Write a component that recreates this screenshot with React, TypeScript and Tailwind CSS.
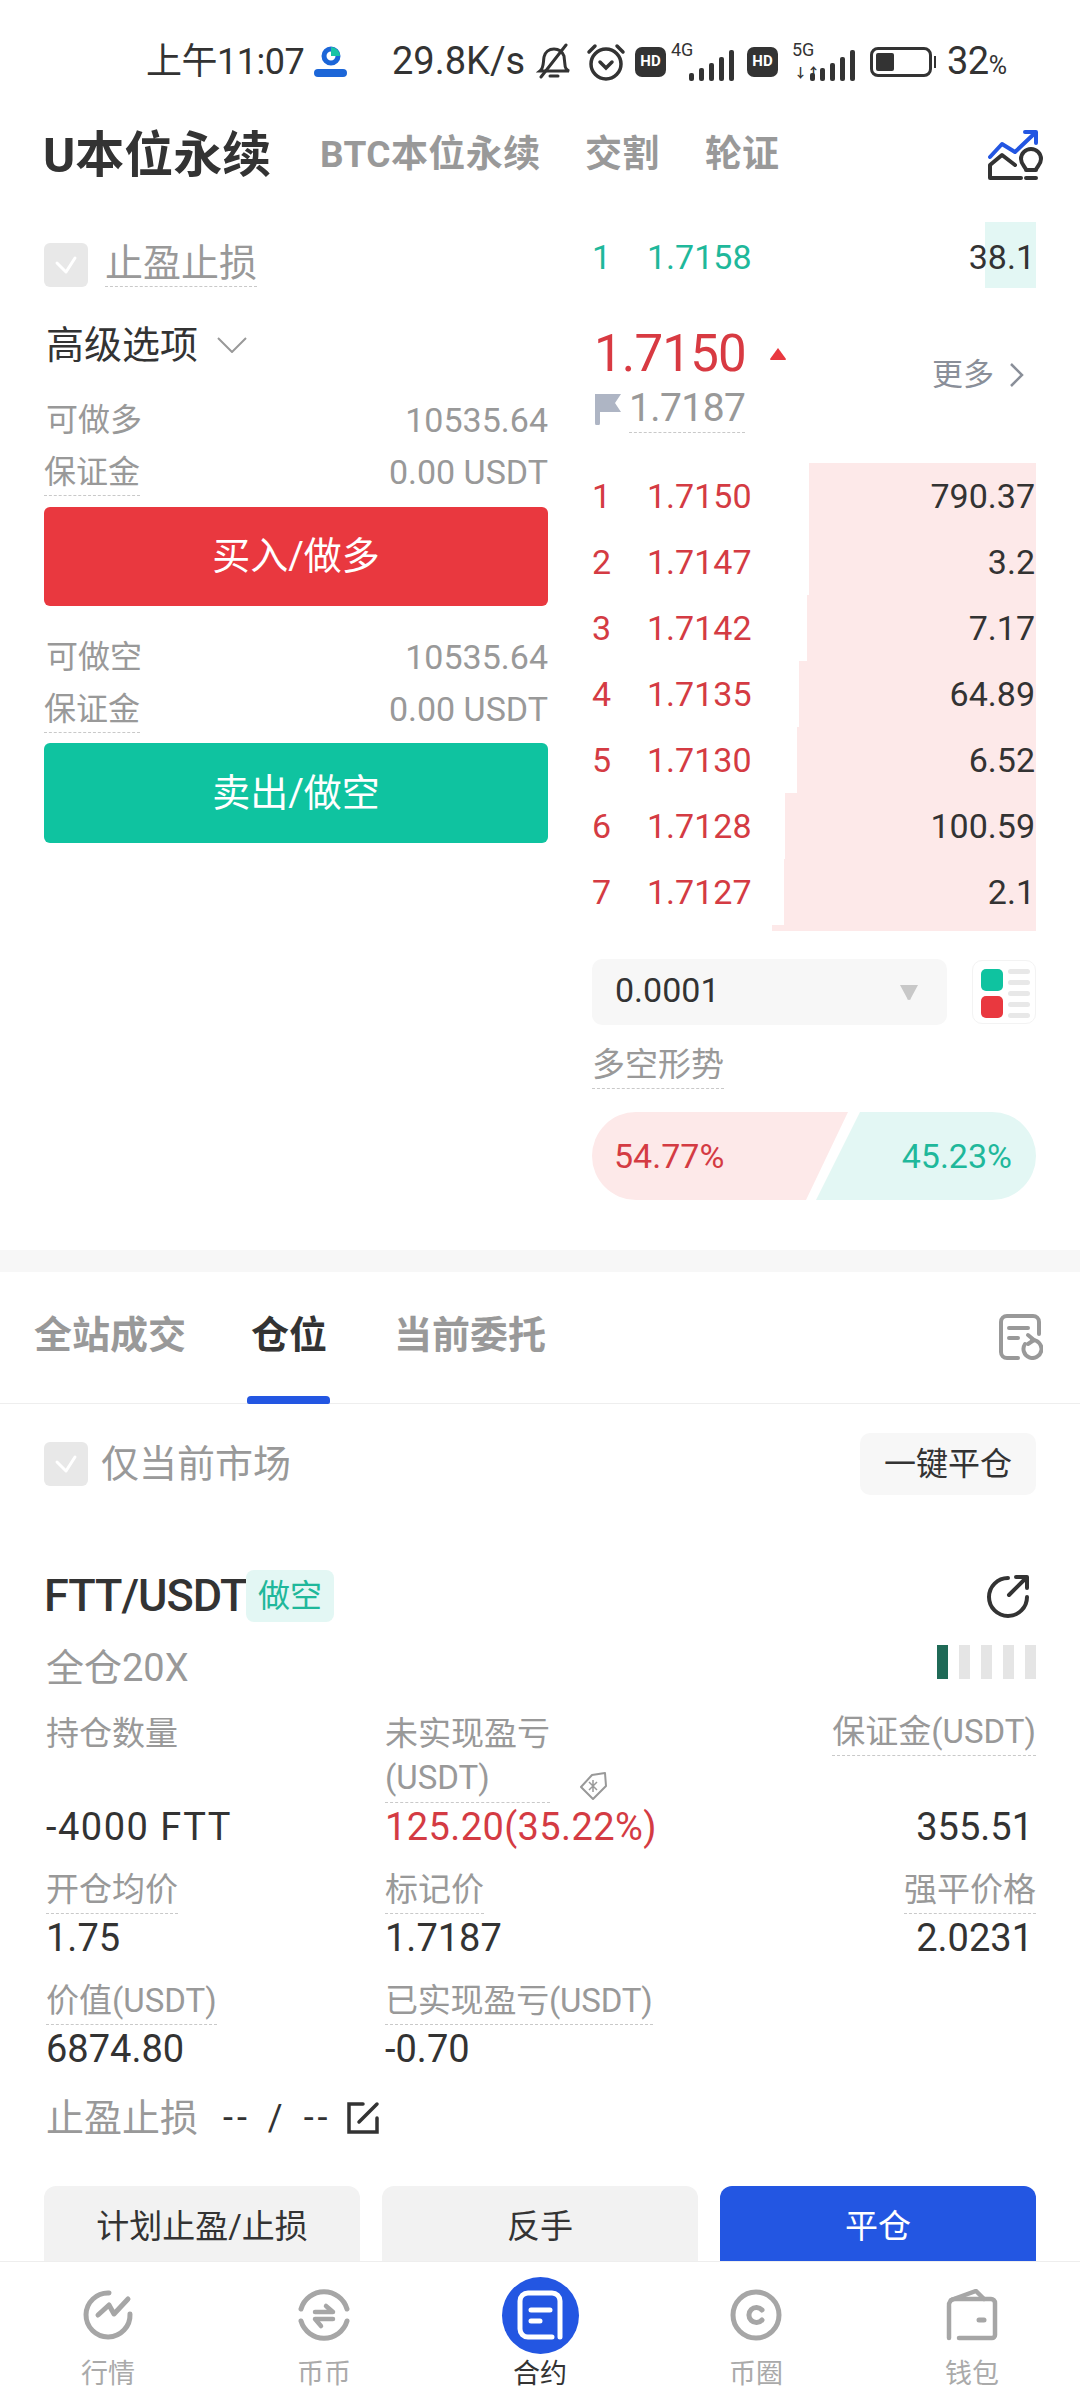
import type { ReactNode } from "react";

const asks = [
  { n: 1, price: "1.7150", qty: "790.37", bar: 227 },
  { n: 2, price: "1.7147", qty: "3.2", bar: 227 },
  { n: 3, price: "1.7142", qty: "7.17", bar: 229 },
  { n: 4, price: "1.7135", qty: "64.89", bar: 237 },
  { n: 5, price: "1.7130", qty: "6.52", bar: 239 },
  { n: 6, price: "1.7128", qty: "100.59", bar: 251 },
  { n: 7, price: "1.7127", qty: "2.1", bar: 252 },
];

const Dashed = ({ children, className = "" }: { children: ReactNode; className?: string }) => (
  <span className={`block h-[44px] whitespace-nowrap border-b border-dashed border-[#c9c9c9] leading-[40px] ${className}`}>
    {children}
  </span>
);

const Checkbox = () => (
  <span className="flex h-[44px] w-[44px] shrink-0 items-center justify-center rounded-[6px] bg-[#e8e8e8]">
    <svg width="24" height="20" viewBox="0 0 24 20" fill="none">
      <path d="M3 8l9 9 9-14" stroke="#fff" strokeWidth="3" strokeLinecap="round" strokeLinejoin="round" />
    </svg>
  </span>
);

const Signal = ({ label, five }: { label: string; five?: boolean }) => (
  <div className="relative h-[38px] w-[64px]">
    <span className="absolute -top-[2px] left-0 text-[18px] leading-[18px] text-[#333]">{label}</span>
    {five && <span className="absolute bottom-[2px] left-[2px] text-[13px] font-bold leading-[13px] text-[#333]">↓↑</span>}
    <svg className="absolute bottom-0 right-0" width="48" height="32" viewBox="0 0 48 32" fill="#333">
      <rect x="2" y="24" width="5" height="8" rx="2" />
      <rect x="12" y="19" width="5" height="13" rx="2" />
      <rect x="22" y="14" width="5" height="18" rx="2" />
      <rect x="32" y="8" width="5" height="24" rx="2" />
      <rect x="42" y="1" width="5" height="31" rx="2" />
    </svg>
  </div>
);

const Hd = () => (
  <span className="flex h-[30px] w-[31px] items-center justify-center rounded-[7px] bg-[#333] text-[15px] font-bold text-white">
    HD
  </span>
);

const StatusBar = () => (
  <div className="flex h-[123px] items-center pl-[146px] text-[36px] text-[#333]">
    <span className="w-[159px] tracking-[-0.5px]">上午11:07</span>
    <svg className="ml-[9px]" width="34" height="32" viewBox="0 0 34 32" fill="none">
      <circle cx="17" cy="10" r="7" stroke="#1c66d8" strokeWidth="5" />
      <path d="M17 1a9 9 0 0 1 9 9h-9z" fill="#19c3a5" />
      <rect x="0" y="23" width="33" height="8" rx="4" fill="#1c66d8" />
    </svg>
    <span className="ml-[44px] w-[136px] whitespace-nowrap text-[38px]">29.8K/s</span>
    <svg className="ml-[8px]" width="36" height="38" viewBox="0 0 36 38" fill="none" stroke="#333" strokeWidth="3" strokeLinecap="round">
      <path d="M4 28c4-3 3-8 4-14 1-5 5-8 10-8s8 2 10 7l1 9c0 3 2 5 4 6H4z" />
      <path d="M14 33h8M30 2L5 34" />
    </svg>
    <svg className="ml-[14px]" width="40" height="38" viewBox="0 0 40 38" fill="none" stroke="#333" strokeWidth="3.5" strokeLinecap="round">
      <circle cx="20" cy="21" r="15" />
      <path d="M3 9l6-6M37 9l-6-6" />
      <path d="M14 19l6 6 6-6" />
    </svg>
    <span className="ml-[9px]"><Hd /></span>
    <span className="ml-[5px]"><Signal label="4G" /></span>
    <span className="ml-[12px]"><Hd /></span>
    <span className="ml-[14px]"><Signal label="5G" five /></span>
    <div className="ml-[14px] flex items-center">
      <span className="flex h-[30px] w-[62px] items-center rounded-[8px] border-[3px] border-[#333] px-[3px]">
        <span className="h-[18px] w-[18px] rounded-[2px] bg-[#333]" />
      </span>
      <span className="ml-[2px] h-[12px] w-[2px] bg-[#333]" />
    </div>
    <span className="ml-[11px] whitespace-nowrap text-[38px] tracking-[-0.5px]">
      32<span className="text-[25px]">%</span>
    </span>
  </div>
);

const TopTabs = () => (
  <div className="flex h-[64px] items-center pl-[43px] pr-[37px]">
    <span className="w-[229px] whitespace-nowrap text-[49px] font-bold leading-none text-[#333]">U本位永续</span>
    <span className="ml-[48px] w-[219px] whitespace-nowrap text-[37px] font-bold tracking-[0.4px] text-[#999]">BTC本位永续</span>
    <span className="ml-[46px] text-[37px] font-bold text-[#999]">交割</span>
    <span className="ml-[46px] text-[37px] font-bold text-[#999]">轮证</span>
    <svg className="ml-auto" width="55" height="50" viewBox="0 0 55 50" fill="none" strokeLinecap="round" strokeLinejoin="round">
      <path d="M2 27l12-13 13 8L47 3" stroke="#2356e2" strokeWidth="4" />
      <path d="M37 2h11v11" stroke="#2356e2" strokeWidth="4" />
      <path d="M2 48V35l12-10 13 10M2 48h31" stroke="#333" strokeWidth="4" />
      <path d="M38 40c0-3-5-5-5-11a10 10 0 0 1 20 0c0 6-5 8-5 11zM38 48h10" stroke="#333" strokeWidth="4" />
    </svg>
  </div>
);

const Info = ({ label, value, dashed }: { label: string; value: string; dashed?: boolean }) => (
  <div className="flex h-[40px] items-start justify-between text-[#999]">
    {dashed ? (
      <Dashed className="w-[96px] text-[32px]">{label}</Dashed>
    ) : (
      <span className="pl-[2px] text-[32px] leading-[40px]">{label}</span>
    )}
    <span className="text-[34px] leading-[40px]">{value}</span>
  </div>
);

const OrderForm = () => (
  <div className="w-[504px] shrink-0">
    <div className="mt-[21px] flex h-[44px] items-start gap-[17px] text-[38px] text-[#999]">
      <Checkbox />
      <Dashed className="w-[152px]">止盈止损</Dashed>
    </div>
    <div className="mt-[33px] flex h-[50px] items-center pl-[2px] text-[38px] text-[#333]">
      高级选项
      <svg className="ml-[19px]" width="30" height="16" viewBox="0 0 30 16" fill="none">
        <path d="M1 1l14 14L29 1" stroke="#999" strokeWidth="2" />
      </svg>
    </div>
    <div className="mt-[30px]"><Info label="可做多" value="10535.64" /></div>
    <div className="mt-[12px]"><Info label="保证金" value="0.00 USDT" dashed /></div>
    <button className="mt-[15px] flex h-[99px] w-full items-center justify-center rounded-[6px] bg-[#e9383f] text-[38px] text-white">
      买入/做多
    </button>
    <div className="mt-[31px]"><Info label="可做空" value="10535.64" /></div>
    <div className="mt-[12px]"><Info label="保证金" value="0.00 USDT" dashed /></div>
    <button className="mt-[14px] flex h-[100px] w-full items-center justify-center rounded-[6px] bg-[#0fc3a0] text-[38px] text-white">
      卖出/做空
    </button>
  </div>
);

const BookRow = ({ n, price, qty, bar, color, barColor, className = "" }: { n: number; price: string; qty: string; bar: number; color: string; barColor: string; className?: string }) => (
  <div className={`relative flex h-[66px] items-center text-[34px] ${className}`}>
    <span className={`absolute bottom-0 right-0 top-0 ${barColor}`} style={{ width: bar }} />
    <span className={`relative w-[55px] ${color}`}>{n}</span>
    <span className={`relative ${color}`}>{price}</span>
    <span className="relative ml-auto pr-[1px] text-[#333]">{qty}</span>
  </div>
);

const OrderBook = () => (
  <div className="w-[444px] shrink-0">
    <BookRow n={1} price="1.7158" qty="38.1" bar={51} color="text-[#1fb89b]" barColor="bg-[#e3f7f4]" className="pt-[4px]" />
    <div className="flex h-[175px] items-start justify-between">
      <div className="pl-[2px] pt-[38px]">
        <div className="flex h-[56px] items-center text-[#d83a42]">
          <span className="text-[51px] tracking-[-0.8px]">1.7150</span>
          <svg className="ml-[23px]" width="18" height="14" viewBox="0 0 18 14" fill="#e9383f">
            <path d="M9 1l8 11a1 1 0 0 1-1 1H2a1 1 0 0 1-1-1z" />
          </svg>
        </div>
        <div className="mt-[2px] flex h-[49px] items-start">
          <svg className="mt-[9px]" width="28" height="32" viewBox="0 0 28 32" fill="#aeb5c4">
            <path d="M1 1h26l-6 9 6 9H6v11a2.500 2.500 0 0 1-5 0z" />
          </svg>
          <span className="ml-[7px] block h-[49px] w-[116px] border-b border-dashed border-[#c9c9c9] text-[39px] leading-[48px] tracking-[-0.6px] text-[#999]">
            1.7187
          </span>
        </div>
      </div>
      <div className="mt-[71px] flex items-center pr-[12px] text-[31px] leading-none text-[#8a8f99]">
        更多
        <svg className="ml-[15px]" width="15" height="24" viewBox="0 0 15 24" fill="none">
          <path d="M2 1l11 11L2 23" stroke="#8a8f99" strokeWidth="2.500" />
        </svg>
      </div>
    </div>
    {asks.map((a) => (
      <BookRow key={a.n} {...a} color="text-[#d43b43]" barColor="bg-[#fde9e9]" />
    ))}
    <div className="ml-auto h-[6px] w-[264px] bg-[#fde9e9]" />

    <div className="mt-[28px] flex items-center justify-between">
      <div className="flex h-[66px] w-[355px] items-center justify-between rounded-[10px] bg-[#f7f7f7] pl-[23px] pr-[28px] text-[34px] text-[#333]">
        <span className="pb-[4px]">0.0001</span>
        <svg width="20" height="16" viewBox="0 0 20 16" fill="#c8c8c8">
          <path d="M1 1h18l-7 13a2 2 0 0 1-4 0z" />
        </svg>
      </div>
      <div className="flex h-[64px] w-[64px] gap-[5px] rounded-[10px] border border-[#f3f3f3] pl-[8px] pt-[8px]">
        <div className="flex flex-col gap-[5px]">
          <span className="h-[22px] w-[22px] rounded-[5px] bg-[#0fc3a0]" />
          <span className="h-[22px] w-[22px] rounded-[5px] bg-[#e9383f]" />
        </div>
        <div className="flex flex-col gap-[6px]">
          {[0, 1, 2, 3, 4].map((i) => (
            <span key={i} className="h-[5px] w-[22px] rounded-full bg-[#e8e8e8]" />
          ))}
        </div>
      </div>
    </div>
    <div className="mt-[20px] w-[132px] text-[33px] text-[#999]">
      <Dashed>多空形势</Dashed>
    </div>
    <div className="mt-[23px] flex h-[88px] text-[34px]">
      <div className="flex w-[256px] items-center rounded-l-[44px] bg-[#fde9e9] pl-[22px] text-[#d43b43] [clip-path:polygon(0_0,100%_0,calc(100%-42px)_100%,0_100%)]">
        54.77%
      </div>
      <div className="-ml-[32px] flex w-[220px] items-center justify-end rounded-r-[44px] bg-[#e3f7f4] pr-[24px] text-[#1fb89b] [clip-path:polygon(44px_0,100%_0,100%_100%,0_100%)]">
        45.23%
      </div>
    </div>
  </div>
);

const PositionTabs = () => (
  <div className="flex h-[132px] border-b border-[#eeeeee] pl-[34px] pr-[37px] pt-[44px] text-[38px] font-bold leading-[38px] text-[#999]">
    <span>全站成交</span>
    <span className="relative ml-[65px] w-[76px] text-[#333]">
      仓位
      <span className="absolute -left-[4px] bottom-[-1px] h-[8px] w-[83px] rounded-t-[4px] rounded-b-[2px] bg-[#2356e2]" />
    </span>
    <span className="ml-[67px]">当前委托</span>
    <svg className="-mt-[2px] ml-auto h-[46px]" width="44" height="46" viewBox="0 0 44 46" fill="none" stroke="#999" strokeWidth="4" strokeLinecap="round" strokeLinejoin="round">
      <path d="M19 44H8a6 6 0 0 1-6-6V8a6 6 0 0 1 6-6h26a6 6 0 0 1 6 6v12" />
      <path d="M10 14h19M10 24h9" />
      <path d="M26 30a9 9 0 1 0 7-4" />
      <path d="M29 21l6 5-6 4" />
    </svg>
  </div>
);

const Label = ({ children, className = "" }: { children: ReactNode; className?: string }) => (
  <Dashed className={`w-fit text-[33px] text-[#999] ${className}`}>{children}</Dashed>
);

const Value = ({ children, className = "text-[#333]" }: { children: ReactNode; className?: string }) => (
  <div className={`h-[48px] text-[38px] leading-[48px] ${className}`}>{children}</div>
);

const Position = () => (
  <div className="px-[44px]">
    <div className="mt-[29px] flex h-[62px] items-center justify-between">
      <div className="flex items-center gap-[13px] text-[38px] text-[#999]">
        <Checkbox />
        仅当前市场
      </div>
      <button className="flex h-[62px] w-[176px] items-center justify-center rounded-[10px] bg-[#f7f7f7] text-[32px] text-[#333]">
        一键平仓
      </button>
    </div>

    <div className="mt-[75px] flex h-[52px] items-center">
      <span className="w-[202px] whitespace-nowrap text-[45px] font-medium tracking-[-1px] text-[#333]">FTT/USDT</span>
      <span className="flex h-[52px] w-[88px] items-center justify-center rounded-[8px] bg-[#e3f7f4] text-[32px] text-[#1fb89b]">
        做空
      </span>
      <svg className="ml-auto mr-[6px]" width="44" height="44" viewBox="0 0 44 44" fill="none" stroke="#333" strokeWidth="4" strokeLinecap="round" strokeLinejoin="round">
        <path d="M22 4A19 19 0 1 0 41 23" />
        <path d="M23 21L40 4M30 3h11v11" />
      </svg>
    </div>

    <div className="mt-[23px] flex h-[40px] items-start justify-between pl-[2px]">
      <span className="pt-[3px] text-[38px] leading-[40px] text-[#999]">全仓20X</span>
      <div className="flex gap-[11px]">
        <span className="h-[34px] w-[11px] bg-[#1f6a57]" />
        <span className="h-[34px] w-[11px] bg-[#e5e5e5]" />
        <span className="h-[34px] w-[11px] bg-[#e5e5e5]" />
        <span className="h-[34px] w-[11px] bg-[#e5e5e5]" />
        <span className="h-[34px] w-[11px] bg-[#e5e5e5]" />
      </div>
    </div>

    <div className="mt-[27px] flex pl-[2px]">
      <div className="w-[339px]">
        <div className="h-[91px] text-[33px] leading-[44px] text-[#999]">持仓数量</div>
        <Value className="tracking-[1.5px] text-[#333]">-4000 FTT</Value>
      </div>
      <div className="flex-1">
        <div className="flex h-[91px] items-end">
          <span className="block h-[91px] w-fit whitespace-nowrap border-b border-dashed border-[#c9c9c9] text-[33px] leading-[44px] text-[#999]">
            未实现盈亏
            <br />
            (USDT)
          </span>
          <svg className="mb-[2px] ml-[28px]" width="30" height="30" viewBox="0 0 30 30" fill="none" stroke="#999" strokeWidth="2" strokeLinejoin="round">
            <path d="M14 4l13-2 1 13-13 13L3 16z" />
            <path d="M11 11l8 8M19 11l-8 8M15 9v12" strokeWidth="1.500" />
          </svg>
        </div>
        <Value className="whitespace-nowrap tracking-[0.4px] text-[#d43b43]">125.20(35.22%)</Value>
      </div>
      <div className="flex flex-col items-end">
        <div className="h-[91px]">
          <Label>保证金(USDT)</Label>
        </div>
        <Value className="pr-[3px] text-[#333]">355.51</Value>
      </div>
    </div>

    <div className="mt-[19px] flex pl-[2px]">
      <div className="w-[339px]">
        <Label>开仓均价</Label>
        <Value>1.75</Value>
      </div>
      <div className="flex-1">
        <Label>标记价</Label>
        <Value>1.7187</Value>
      </div>
      <div className="flex flex-col items-end">
        <Label>强平价格</Label>
        <Value className="pr-[3px] text-[#333]">2.0231</Value>
      </div>
    </div>

    <div className="mt-[19px] flex pl-[2px]">
      <div className="w-[339px]">
        <Label>价值(USDT)</Label>
        <Value>6874.80</Value>
      </div>
      <div className="flex-1">
        <Label className="tracking-[-0.2px]">已实现盈亏(USDT)</Label>
        <Value>-0.70</Value>
      </div>
    </div>

    <div className="mt-[23px] flex h-[44px] items-center pl-[2px]">
      <span className="text-[38px] text-[#999]">止盈止损</span>
      <span className="ml-[25px] w-[112px] whitespace-nowrap text-[36px] tracking-[4px] text-[#333] [word-spacing:4px]">-- / --</span>
      <svg className="ml-[11px]" width="34" height="34" viewBox="0 0 34 34" fill="none" stroke="#333" strokeWidth="3.500" strokeLinecap="round">
        <path d="M17 3H3v28h28V17" />
        <path d="M13 21L31 3" />
      </svg>
    </div>

    <div className="mt-[46px] grid grid-cols-3 gap-[22px] text-[33px]">
      <button className="h-[100px] rounded-[12px] bg-[#f2f2f2] pb-[18px] text-[#333]">计划止盈/止损</button>
      <button className="h-[100px] rounded-[12px] bg-[#f2f2f2] pb-[18px] text-[#333]">反手</button>
      <button className="h-[100px] rounded-[12px] bg-[#2356e2] pb-[18px] text-white">平仓</button>
    </div>
  </div>
);

const NavItem = ({ label, active, children }: { label: string; active?: boolean; children: ReactNode }) => (
  <div className="flex flex-col items-center">
    <div className="flex h-[97px] items-center justify-center pt-[9px]">{children}</div>
    <span className={`text-[27px] leading-[30px] ${active ? "text-[#333]" : "text-[#aaaaaa]"}`}>{label}</span>
  </div>
);

const BottomNav = () => (
  <div className="grid h-[139px] shrink-0 grid-cols-5 border-t border-[#eeeeee] bg-white">
    <NavItem label="行情">
      <svg width="50" height="50" viewBox="0 0 50 50" fill="none" stroke="#a6a6a6" strokeWidth="5" strokeLinecap="round" strokeLinejoin="round">
        <path d="M26 3A22 22 0 1 0 47 24" />
        <path d="M15 25l11-10 5 9 14-15" />
      </svg>
    </NavItem>
    <NavItem label="币币">
      <svg width="52" height="52" viewBox="0 0 52 52" fill="none" stroke="#a6a6a6" strokeWidth="5" strokeLinecap="round" strokeLinejoin="round">
        <path d="M3 20A24 24 0 0 1 49 20M49 32A24 24 0 0 1 3 32" />
        <path d="M17 23h18l-7-6M35 30H17l6 7" strokeWidth="4.500" />
      </svg>
    </NavItem>
    <NavItem label="合约" active>
      <div className="flex h-[77px] w-[77px] items-center justify-center rounded-full bg-[#2356e2]">
        <svg width="46" height="50" viewBox="0 0 46 50" fill="none" stroke="#fff" strokeWidth="5" strokeLinecap="round" strokeLinejoin="round">
          <path d="M35 47H11a8 8 0 0 1-8-8V11a8 8 0 0 1 8-8h24a8 8 0 0 1 8 8v36" />
          <path d="M14 20h19M14 31h9" />
        </svg>
      </div>
    </NavItem>
    <NavItem label="币圈">
      <svg width="52" height="52" viewBox="0 0 52 52" fill="none" stroke="#a6a6a6" strokeWidth="5">
        <circle cx="26" cy="26" r="23" />
        <path d="M32 21a7.500 7.500 0 1 0 0 10" strokeWidth="5" strokeLinecap="round" />
      </svg>
    </NavItem>
    <NavItem label="钱包">
      <svg width="52" height="52" viewBox="0 0 52 52" fill="none" stroke="#a6a6a6" strokeWidth="4.500" strokeLinecap="round" strokeLinejoin="round">
        <path d="M3 49V17a6 6 0 0 1 6-7h36a4 4 0 0 1 4 4v32a3 3 0 0 1-3 3H13" />
        <path d="M5 11l25-9 8 8" />
        <path d="M33 31h5" strokeWidth="5" />
      </svg>
    </NavItem>
  </div>
);

export default function App() {
  return (
    <div className="flex h-[2400px] w-[1080px] flex-col overflow-hidden bg-white font-['Roboto','Noto_Sans_CJK_SC',sans-serif]">
      <div className="min-h-0 flex-1 overflow-hidden">
        <StatusBar />
        <TopTabs />
        <div className="mt-[35px] flex justify-between px-[44px]">
          <OrderForm />
          <OrderBook />
        </div>
        <div className="mt-[50px] h-[22px] bg-[#f7f7f7]" />
        <PositionTabs />
        <Position />
      </div>
      <BottomNav />
    </div>
  );
}
